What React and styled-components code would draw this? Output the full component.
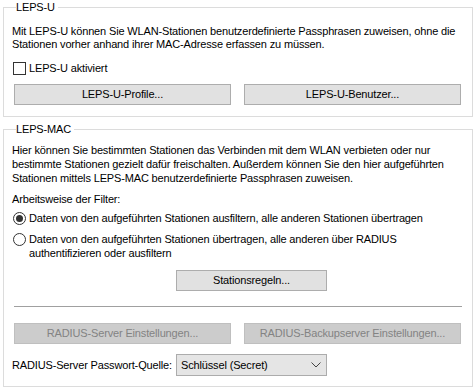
import styled, { createGlobalStyle } from 'styled-components';

const GlobalStyle = createGlobalStyle`
	html, body {
		margin: 0;
		padding: 0;
		background: #ffffff;
	}
	body {
		font-family: 'Liberation Sans', Arial, sans-serif;
		font-size: 11px;
		letter-spacing: -0.15px;
		color: #000000;
	}
`;

const Page = styled.div`
	width: 476px;
	height: 391px;
	box-sizing: border-box;
	padding: 1px 3px 0 3px;
	display: flex;
	flex-direction: column;
	gap: 6px;
`;

const Group = styled.fieldset`
	margin: 0;
	border: 1px solid #dcdcdc;
	padding: ${(props) => props.$pad || '0 10px 11px 8px'};
	min-width: 0;
	display: flex;
	flex-direction: column;
`;

const Legend = styled.legend`
	padding: 0 3px 0 0;
	margin-left: 4px;
	line-height: 13px;
`;

const Text = styled.p`
	margin: ${(props) => props.$margin || '0'};
	line-height: ${(props) => props.$lh || '13px'};
	white-space: nowrap;
`;

const CheckRow = styled.label`
	display: flex;
	align-items: center;
	gap: 3px;
	margin: ${(props) => props.$margin || '0'};
	line-height: 13px;
	padding-left: 1px;
`;

const CheckBox = styled.span`
	width: 11px;
	height: 11px;
	border: 1px solid #333333;
	background: #ffffff;
	flex: none;
`;

const RadioRow = styled.div`
	display: flex;
	align-items: flex-start;
	gap: 3px;
	margin: ${(props) => props.$margin || '0'};
	padding-left: 1px;
`;

const RadioCircle = styled.span`
	width: 11px;
	height: 11px;
	margin-top: 1px;
	border: 1px solid #333333;
	border-radius: 50%;
	background: #ffffff;
	flex: none;
	display: flex;
	align-items: center;
	justify-content: center;
	&::after {
		content: '';
		width: 7px;
		height: 7px;
		border-radius: 50%;
		background: ${(props) => (props.$checked ? '#333333' : 'transparent')};
	}
`;

const RadioText = styled.span`
	line-height: 14px;
	white-space: nowrap;
`;

const ButtonRow = styled.div`
	display: flex;
	gap: 13px;
	padding-left: 2px;
	margin: ${(props) => props.$margin || '0'};
`;

const Button = styled.div`
	width: ${(props) => props.$w || '217px'};
	height: 21px;
	box-sizing: border-box;
	border: 1px solid ${(props) => (props.$disabled ? '#bfbfbf' : '#adadad')};
	background: ${(props) => (props.$disabled ? '#cccccc' : '#e1e1e1')};
	color: ${(props) => (props.$disabled ? '#838383' : '#000000')};
	display: flex;
	align-items: center;
	justify-content: center;
	line-height: 13px;
	white-space: nowrap;
`;

const OffsetRow = styled.div`
	display: flex;
	margin: ${(props) => props.$margin || '0'};
	padding-left: 164px;
`;

const Separator = styled.div`
	height: 1px;
	background: #a0a0a0;
	margin: ${(props) => props.$margin || '0'};
	margin-left: 2px;
`;

const FieldRow = styled.div`
	display: flex;
	align-items: center;
	margin: ${(props) => props.$margin || '0'};
`;

const FieldLabel = styled.span`
	width: 164px;
	flex: none;
	white-space: nowrap;
`;

const Select = styled.div`
	width: 151px;
	height: 22px;
	box-sizing: border-box;
	border: 1px solid #acacac;
	background: #e5e5e5;
	display: flex;
	align-items: center;
	justify-content: space-between;
	padding: 0 5px 0 4px;
	white-space: nowrap;
`;

const Chevron = () => (
	<svg width="10" height="6" viewBox="0 0 10 6">
		<path d="M0.5 0.5 L5 5 L9.5 0.5" fill="none" stroke="#444444" strokeWidth="1" />
	</svg>
);

export default function App() {
	return (
		<>
			<GlobalStyle />
			<Page>
				<Group>
					<Legend>LEPS-U</Legend>
					<Text $margin="11px 0 0 0">
						Mit LEPS-U können Sie WLAN-Stationen benutzerdefinierte Passphrasen zuweisen, ohne die
						<br />
						Stationen vorher anhand ihrer MAC-Adresse erfassen zu müssen.
					</Text>
					<CheckRow $margin="11px 0 0 0">
						<CheckBox />
						LEPS-U aktiviert
					</CheckRow>
					<ButtonRow $margin="9px 0 0 0">
						<Button>LEPS-U-Profile...</Button>
						<Button>LEPS-U-Benutzer...</Button>
					</ButtonRow>
				</Group>
				<Group $pad="0 10px 10px 8px">
					<Legend>LEPS-MAC</Legend>
					<Text $margin="7px 0 0 0" $lh="14px">
						Hier können Sie bestimmten Stationen das Verbinden mit dem WLAN verbieten oder nur
						<br />
						bestimmte Stationen gezielt dafür freischalten. Außerdem können Sie den hier aufgeführten
						<br />
						Stationen mittels LEPS-MAC benutzerdefinierte Passphrasen zuweisen.
					</Text>
					<Text $margin="7px 0 0 0" $lh="14px">Arbeitsweise der Filter:</Text>
					<RadioRow $margin="5px 0 0 0">
						<RadioCircle $checked />
						<RadioText>Daten von den aufgeführten Stationen ausfiltern, alle anderen Stationen übertragen</RadioText>
					</RadioRow>
					<RadioRow $margin="7px 0 0 0">
						<RadioCircle />
						<RadioText>
							Daten von den aufgeführten Stationen übertragen, alle anderen über RADIUS
							<br />
							authentifizieren oder ausfiltern
						</RadioText>
					</RadioRow>
					<OffsetRow $margin="10px 0 0 0">
						<Button $w="151px">Stationsregeln...</Button>
					</OffsetRow>
					<Separator $margin="15px 0 0 0" />
					<ButtonRow $margin="16px 0 0 0">
						<Button $disabled>RADIUS-Server Einstellungen...</Button>
						<Button $disabled>RADIUS-Backupserver Einstellungen...</Button>
					</ButtonRow>
					<FieldRow $margin="10px 0 0 0">
						<FieldLabel>RADIUS-Server Passwort-Quelle:</FieldLabel>
						<Select>
							<span>Schlüssel (Secret)</span>
							<Chevron />
						</Select>
					</FieldRow>
				</Group>
			</Page>
		</>
	);
}
